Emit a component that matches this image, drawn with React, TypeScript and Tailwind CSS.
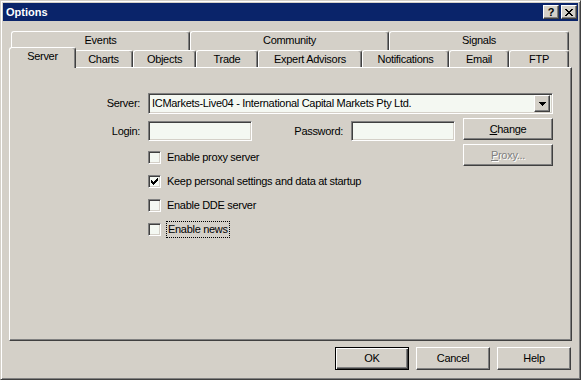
import React from 'react';

const raised =
  'border border-t-white border-l-white border-r-[#404040] border-b-[#404040] shadow-[inset_-1px_-1px_0_#808080,inset_1px_1px_0_#d4d0c8]';
const sunken =
  'border border-t-[#808080] border-l-[#808080] border-r-white border-b-white shadow-[inset_1px_1px_0_#404040,inset_-1px_-1px_0_#d4d0c8]';
const tabEdge =
  'border-t border-l border-r border-t-white border-l-white border-r-[#404040] rounded-t-[3px] shadow-[inset_-1px_0_0_#808080]';

const backTabs = [
  { label: 'Events', w: 'w-[179px]' },
  { label: 'Community', w: 'w-[199px]' },
  { label: 'Signals', w: 'w-[180px]' },
];

const frontTabs = [
  { label: 'Server', w: 'w-[67px]', active: true },
  { label: 'Charts', w: 'w-[59px]' },
  { label: 'Objects', w: 'w-[63px]' },
  { label: 'Trade', w: 'w-[62px]' },
  { label: 'Expert Advisors', w: 'w-[104px]' },
  { label: 'Notifications', w: 'w-[87px]' },
  { label: 'Email', w: 'w-[60px]' },
  { label: 'FTP', w: 'w-[60px]' },
];

const options = [
  { label: 'Enable proxy server', checked: false },
  { label: 'Keep personal settings and data at startup', checked: true },
  { label: 'Enable DDE server', checked: false },
  { label: 'Enable news', checked: false, focus: true },
];

const CheckMark = () => (
  <svg width="7" height="7" viewBox="0 0 7 7" shapeRendering="crispEdges">
    <rect x="0" y="2" width="1" height="3" fill="#000" />
    <rect x="1" y="3" width="1" height="3" fill="#000" />
    <rect x="2" y="4" width="1" height="3" fill="#000" />
    <rect x="3" y="3" width="1" height="3" fill="#000" />
    <rect x="4" y="2" width="1" height="3" fill="#000" />
    <rect x="5" y="1" width="1" height="3" fill="#000" />
    <rect x="6" y="0" width="1" height="3" fill="#000" />
  </svg>
);

const CloseGlyph = () => (
  <svg width="8" height="7" viewBox="0 0 8 7" shapeRendering="crispEdges">
    <rect x="0" y="0" width="2" height="1" />
    <rect x="6" y="0" width="2" height="1" />
    <rect x="1" y="1" width="2" height="1" />
    <rect x="5" y="1" width="2" height="1" />
    <rect x="2" y="2" width="4" height="1" />
    <rect x="3" y="3" width="2" height="1" />
    <rect x="2" y="4" width="4" height="1" />
    <rect x="1" y="5" width="2" height="1" />
    <rect x="5" y="5" width="2" height="1" />
    <rect x="0" y="6" width="2" height="1" />
    <rect x="6" y="6" width="2" height="1" />
  </svg>
);

const DownArrow = () => (
  <svg width="7" height="4" viewBox="0 0 7 4" shapeRendering="crispEdges">
    <rect x="0" y="0" width="7" height="1" />
    <rect x="1" y="1" width="5" height="1" />
    <rect x="2" y="2" width="3" height="1" />
    <rect x="3" y="3" width="1" height="1" />
  </svg>
);

const Checkbox = ({ checked }: { checked: boolean }) => (
  <div className={`w-[13px] h-[13px] shrink-0 bg-[#f4f8f2] flex items-center justify-center ${sunken}`}>
    {checked && <CheckMark />}
  </div>
);

export default function App() {
  return (
    <div className="w-[581px] h-[380px] bg-[#d4d0c8] p-[2px] border border-t-[#d4d0c8] border-l-[#d4d0c8] border-r-[#404040] border-b-[#404040] shadow-[inset_1px_1px_0_#fff,inset_-1px_-1px_0_#808080] font-['Liberation_Sans',Arial,sans-serif] text-[11px] tracking-[-0.3px] text-black leading-none select-none">
      {/* title bar */}
      <div className="h-[18px] bg-[#0a246a] flex items-center justify-between pl-[3px] pr-[1px]">
        <span className="text-white font-bold text-[11px] tracking-normal">Options</span>
        <div className="flex gap-[2px]">
          <div className={`w-[16px] h-[14px] bg-[#d4d0c8] flex items-center justify-center font-bold text-[11px] ${raised}`}>?</div>
          <div className={`w-[16px] h-[14px] bg-[#d4d0c8] flex items-center justify-center ${raised}`}>
            <CloseGlyph />
          </div>
        </div>
      </div>

      {/* tabs */}
      <div className="mt-[10px] pl-[8px]">
        <div className="flex h-[19px]">
          {backTabs.map((t) => (
            <div key={t.label} className={`${t.w} h-full flex items-center justify-center pb-[1px] ${tabEdge}`}>
              {t.label}
            </div>
          ))}
        </div>
        <div className="flex items-end h-[17px]">
          {frontTabs.map((t) =>
            t.active ? (
              <div
                key={t.label}
                className={`${t.w} h-[21px] -mx-[2px] -mb-[1px] relative z-10 bg-[#d4d0c8] flex items-center justify-center pb-[3px] ${tabEdge}`}
              >
                {t.label}
              </div>
            ) : (
              <div key={t.label} className={`${t.w} h-full flex items-center justify-center ${tabEdge}`}>
                {t.label}
              </div>
            )
          )}
        </div>
      </div>

      {/* panel */}
      <div className="ml-[6px] w-[563px] h-[274px] border border-t-white border-l-white border-r-[#404040] border-b-[#404040] shadow-[inset_-1px_-1px_0_#808080] pt-[25px]">
        <div className="flex items-center">
          <div className="w-[130px] text-right">Server:</div>
          <div className={`ml-[8px] w-[405px] h-[21px] bg-[#f4f8f2] flex items-center p-[2px] ${sunken}`}>
            <span className="flex-1 pl-[1px]">ICMarkets-Live04 - International Capital Markets Pty Ltd.</span>
            <div className={`w-[16px] h-[17px] bg-[#d4d0c8] flex items-center justify-center ${raised}`}>
              <DownArrow />
            </div>
          </div>
        </div>

        <div className="flex mt-[4px]">
          <div className="flex flex-col">
            <div className="flex items-center mt-[3px]">
              <div className="w-[130px] text-right">Login:</div>
              <div className={`ml-[8px] w-[104px] h-[20px] bg-[#f4f8f2] ${sunken}`} />
              <div className="w-[91px] text-right">Password:</div>
              <div className={`ml-[8px] w-[104px] h-[20px] bg-[#f4f8f2] ${sunken}`} />
            </div>
            <div className="mt-[10px] pl-[138px] flex flex-col gap-[11px]">
              {options.map((o) => (
                <div key={o.label} className="flex items-center h-[13px]">
                  <Checkbox checked={o.checked} />
                  <span
                    className={
                      o.focus
                        ? 'ml-[5px] px-[1px] py-[2px] border border-dotted border-black'
                        : 'ml-[6px]'
                    }
                  >
                    {o.label}
                  </span>
                </div>
              ))}
            </div>
          </div>
          <div className="ml-[8px] flex flex-col gap-[4px]">
            <div className={`w-[90px] h-[22px] flex items-center justify-center ${raised}`}>
              <span>
                <span className="underline">C</span>hange
              </span>
            </div>
            <div className={`w-[90px] h-[22px] flex items-center justify-center text-[#808080] [text-shadow:1px_1px_0_#fff] ${raised}`}>
              <span>
                <span className="underline">P</span>roxy...
              </span>
            </div>
          </div>
        </div>
      </div>

      {/* dialog buttons */}
      <div className="mt-[6px] flex justify-end gap-[7px] pr-[7px]">
        <div className="w-[74px] h-[23px] flex items-center justify-center border border-black shadow-[inset_1px_1px_0_#fff,inset_-1px_-1px_0_#404040,inset_-2px_-2px_0_#808080]">
          OK
        </div>
        <div className={`w-[74px] h-[23px] flex items-center justify-center ${raised}`}>Cancel</div>
        <div className={`w-[74px] h-[23px] flex items-center justify-center ${raised}`}>Help</div>
      </div>
    </div>
  );
}
